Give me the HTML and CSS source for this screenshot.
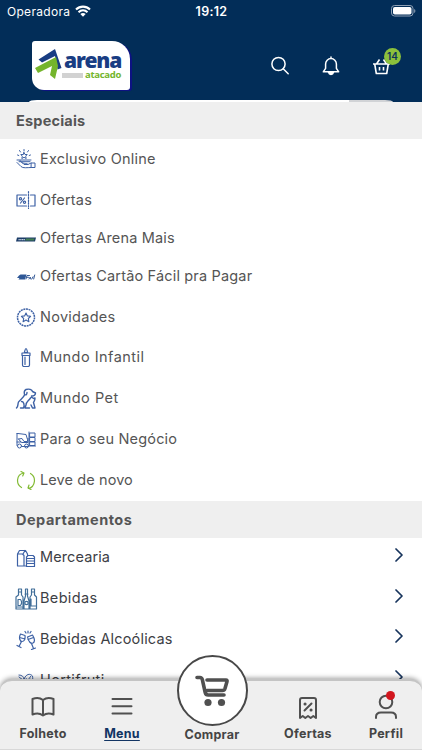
FILE: index.html
```html
<!DOCTYPE html>
<html lang="pt-BR">
<head>
<meta charset="utf-8">
<meta name="viewport" content="width=device-width, initial-scale=1">
<title>Arena Atacado</title>
<link rel="stylesheet" href="styles.css">
</head>
<body>
<div class="app">
  <header class="header">
    <div class="status">
      <div class="carrier"><span>Operadora</span>
        <svg width="16" height="12" viewBox="0 0 16 12" fill="none" stroke="#fff" stroke-width="2.1"><path d="M1 4.500C5 .6 11 .6 15 4.500M3.500 7.200c2.600-2.400 6.400-2.400 9 0"/><path d="M5.300 8.900c1.600-1.300 3.800-1.300 5.400 0L8 11.700z" fill="#fff" stroke="none"/></svg>
      </div>
      <time class="clock">19:12</time>
      <svg class="battery" width="25" height="12" viewBox="0 0 25 12"><rect x=".5" y=".5" width="21.500" height="10.500" rx="3" fill="none" stroke="#8ea0b5"/><rect x="2" y="2" width="18.500" height="7.500" rx="1.800" fill="#fff"/><path d="M23.200 4v4c1.600-.7 1.600-3.300 0-4z" fill="#8ea0b5"/></svg>
    </div>
    <div class="bar">
      <div class="logo">
        <svg class="logo-mark" width="28" height="32" viewBox="0 0 28 32"><path d="M3.500 11.500 20 1l6.500 19-4 1.500L20 8 7 14.500z" fill="#193d83"/><path d="M0 20 21 9l2 9-3 13-5-4 2-9-14 7z" fill="#74b52c"/></svg>
        <div class="logo-words"><span class="logo-name">arena</span><div class="logo-sub"><i></i><span>atacado</span></div></div>
      </div>
      <div class="actions">
        <svg width="20" height="20" viewBox="0 0 20 20" fill="none" stroke="#fff" stroke-width="1.500" stroke-linecap="round"><circle cx="8.500" cy="8" r="6.600"/><path d="m13.200 12.700 5 5"/></svg>
        <svg width="20" height="20" viewBox="0 0 20 20" fill="none" stroke="#fff" stroke-width="1.500" stroke-linejoin="round" stroke-linecap="round"><path d="M10 1v1.500M2.300 15.800h15.400l-2.300-3.500V8A5.400 5.400 0 0 0 4.600 8v4.300z"/><path d="M7.500 16.300c.8 2.800 4.200 2.800 5 0z" fill="#fff"/></svg>
        <div class="cart">
          <svg width="20" height="20" viewBox="0 0 20 20" fill="none" stroke="#fff" stroke-width="1.600" stroke-linejoin="round"><path d="M1 8h17M2.800 8.500l1.500 9h10.400l1.500-9M4.500 8 7.500 3.500M14.500 8 11.500 3.500M7.500 11v3.500M11.500 11v3.500"/></svg>
          <span class="badge">14</span>
        </div>
      </div>
    </div>
    <div class="search-edge"></div>
  </header>

  <main class="list">
    <h2 class="first">Especiais</h2>
    <ul>
      <li><svg viewBox="0 0 20 20"><path d="m8 3.500 1 2h2.200L9.700 7.200l.5 2.300L8 8.300 5.800 9.500l.5-2.300-1.500-1.700H7zM8 .5v1.500M3.500 1.500l1 1.500M12.500 1.500l-1 1.500M1.500 6l1.300.5M14.500 6l-1.300.5M1 11h14M3 12.700h11M1 13.500l4 4c2 2 6 1 10 1M6 13.500l2 2h4l3-1.500M15.500 14H19v4.500h-3.500zM4 11.500c1 3 5 3 7 3"/></svg><span class="t1">Exclusivo Online</span></li>
      <li><svg class="ticket" viewBox="0 0 20 20"><path d="M10.500 5H1v11h9.500M14.500 5H19v11h-4.500"/><path d="M12.500 1.500v17" stroke-dasharray="1.500 1.300"/><path d="m4.500 13 4-5"/><circle cx="4.500" cy="8.700" r="1.100"/><circle cx="8.500" cy="12.300" r="1.100"/></svg><span class="t2">Ofertas</span></li>
      <li class="short"><svg viewBox="0 0 20 20"><path d="M1 8.500h19l-1 4H0z" fill="#1c3d68" stroke="none"/><path d="M10 9.500h8.500l-.5 2H9z" fill="#448052" stroke="none"/><path d="M2.500 10.600h6.500" stroke="#c5d1df" stroke-width="1.300" stroke-dasharray="1.300 .4" stroke-linecap="butt"/></svg><span class="t3">Ofertas Arena Mais</span></li>
      <li class="short"><svg class="card" viewBox="0 0 20 20"><path d="M4.500 7.500h6L9 12.500H2.500l1-1.500H1l2-2.500z" fill="#2e5796" stroke="none"/><path d="M10 12 11 8.500h2.500M10.500 10.300h2M13 12l1.200-2 .6 2M17 9.800l-1.200 2.200M18.700 8l-1 4" stroke="#355996"/></svg><span class="t4">Ofertas Cartão Fácil pra Pagar</span></li>
      <li><svg viewBox="0 0 20 20"><circle cx="10" cy="10.500" r="8.500" stroke-width="1.500" stroke-dasharray="2 .65" stroke-linecap="butt"/><path stroke-width="1.100" d="m10 6 1.400 2.900 3.200.4-2.300 2.200.6 3.200-2.900-1.600-2.900 1.600.6-3.200-2.300-2.200 3.200-.4z"/></svg><span class="t5">Novidades</span></li>
      <li><svg viewBox="0 0 20 20"><path d="M10 1.500c-1 0-1 2.500-1.700 4h3.400c-.7-1.500-.7-4-1.700-4zM6 6h8v2.500H6zM6.500 8.500V18c0 1 .5 1.500 1.500 1.500h4c1 0 1.500-.5 1.500-1.500V8.500M9 10v7.500" stroke-width="1.200"/></svg><span class="t6">Mundo Infantil</span></li>
      <li><svg class="pet" viewBox="0 0 20 20"><path d="M.5 20c2-1 1-4 2-6s5-4 6-7M10 1.500C8 2.500 8 4.500 8.500 6.500c1.500 1 2.500 0 2.500-2M10 1.500c3-1 6 0 6.500 2l3 1.500c0 3-2 3-4 3M14.500 10l1-1 2 1.500 1.500-.5c0 3-1 3-1.500 4.500L19 20h-2.500L15 17M14.500 10c-2 3-4.500 4-4.500 7l-1 3h4.500M5.500 13.500c2 0 3.500 3 2 6.500h-3"/></svg><span class="t7">Mundo Pet</span></li>
      <li><svg viewBox="0 0 20 20"><path d="M1 4.500h1l8 1 1.500 5v2H8L6 9.500 2.500 10M1 4.500v12M2.500 10l3 3.500h6.500V9.500M1 13h4M6 17.500h6M13 3v14h6.500M14 4h5v4h-5zM14 8.500h5v4h-5zM14 13h5v3.500h-5z"/><circle cx="3.500" cy="17" r="2"/><circle cx="10.500" cy="17" r="2"/></svg><span class="t8">Para o seu Negócio</span></li>
      <li class="green"><svg viewBox="0 0 20 20"><path d="M5.500 17.500C-.5 14 .5 4.500 7.500 3M14.500 3.500c6 3.500 5 13-2 15M5 1.500 8 3 6.700 6M15 19.500l-3-1.500 1-3"/></svg><span class="t9">Leve de novo</span></li>
    </ul>
    <h2 class="second">Departamentos</h2>
    <ul class="departments">
      <li><svg viewBox="0 0 20 20"><path d="M1.500 6v12H10M1.500 6l2-3.500h6l2 3.500v1M1.500 6h5l1.500 1.500V18M9 2.500 7 6M10.500 9 12 7.500h5L18.500 9v9.500h-8zM10.500 10.500h8M10.500 13h8M10.500 15.500h8" stroke-width="1.200"/></svg><span class="u1">Mercearia</span><svg class="chev" viewBox="0 0 10 14"><path d="m2 1 6 6-6 6"/></svg></li>
      <li><svg class="bottles" viewBox="0 0 20 20"><path d="M2.500 0h3v6L7 8v12H0V8l2.500-2zM8 20v-8l1.500-5V0h2v7l1.500 5v8zM15.500 0h3v6l2 2v12h-6.500V8l1.500-2zM2.500 3h3M15.500 3h3M1 18h5M15 10v7h5M9 5h3"/><circle cx="10.500" cy="14" r="1.700"/><path d="M2 10.500h2.500c1.500 2 1.500 4 0 6H2z"/></svg><span class="u2">Bebidas</span><svg class="chev" viewBox="0 0 10 14"><path d="m2 1 6 6-6 6"/></svg></li>
      <li><svg viewBox="0 0 20 20"><path d="m4.500 4 4.500 1.500c.5 4-1 6-3 6S2.500 8 4.500 4zM5.500 11.500l-2.500 5M1 15.500l4 2M11.500 7l5-2c2.500 4 2.500 7 .5 8-2 1-4.500-1-5.500-6zM15.500 13.500l2 5M15.500 19.500l4-1.500M3.500 7.500l5.500 1.500M12 9.500l5.500-2M9 1.500l1 1.500M12 1v2M15 1.500 14 3" stroke-width="1.200"/></svg><span class="u3">Bebidas Alcoólicas</span><svg class="chev" viewBox="0 0 10 14"><path d="m2 1 6 6-6 6"/></svg></li>
      <li><svg viewBox="0 0 20 20"><path d="M3 4c3 0 5 2 5 4L6 9M3 6l4 3-3 2M8 8c2-5 6-6 8.500-3 1 5-1 9-4 11-5 0-7-4-4.500-8zM10 7.500l2 1.500 3-4M15 8c1 1 1 4-1 5"/></svg><span class="u4">Hortifruti</span><svg class="chev" viewBox="0 0 10 14"><path d="m2 1 6 6-6 6"/></svg></li>
    </ul>
  </main>

  <nav class="tabs">
    <a class="tab folheto"><svg width="24" height="22" viewBox="0 0 24 22"><path d="M12 4C9.500 2 5 1.500 1.500 3v15.500c3.500-1.500 8-1 10.500 1 2.500-2 7-2.500 10.500-1V3C19 1.500 14.500 2 12 4zv15.500"/></svg><span>Folheto</span></a>
    <a class="tab menu"><svg width="24" height="22" viewBox="0 0 24 22"><path d="M2.500 3h19M2.500 10.300h19M2.500 17.600h19"/></svg><span>Menu</span></a>
    <a class="tab buy"><span>Comprar</span></a>
    <a class="tab offers"><svg width="20" height="24" viewBox="0 0 20 24"><path d="M2 22V4c0-1.500.5-2 2-2h12c1.500 0 2 .5 2 2v18l-2.700-2-2.600 2-2.700-2-2.700 2-2.600-2zM6.500 14.500l7-7"/><path d="M7 8h.1M13 14h.1" stroke-width="3" stroke-linecap="round"/></svg><span>Ofertas</span></a>
    <a class="tab profile"><svg width="24" height="26" viewBox="0 0 24 26"><circle cx="12" cy="8" r="6.300"/><path d="M2 24v-1c0-3 2-4.500 5-4.500h10c3 0 5 1.500 5 4.500v1"/></svg><span>Perfil</span><i class="dot"></i></a>
    <div class="buy-circle"><svg width="38" height="34" viewBox="0 0 38 34"><path d="M3 3.500h3c1.500 0 2 .8 2.400 2.300l2.800 12.700c.5 2 1.300 2.500 3 2.500H30M13 6h19c1 0 1.300.5 1 1.500l-2 7c-.5 1.500-1 2-2.500 2H13"/><circle class="wheel" cx="14" cy="28.500" r="3.600"/><circle class="wheel" cx="27.500" cy="28.500" r="3.600"/></svg></div>
  </nav>
</div>
</body>
</html>
```
FILE: styles.css
```css
* { box-sizing: border-box; }
body { margin: 0; background: #fff; color: #555; font-family: Inter, "Open Sans", sans-serif; }
.app { position: relative; width: 422px; height: 750px; overflow: hidden; }
.header { height: 102px; display: flex; flex-direction: column; background: #022d58; color: #fff; }
.status { height: 22px; flex: none; display: grid; grid-template-columns: 1fr auto 1fr; align-items: center; padding: 0 6px 0 7px; font-size: 12px; }
.carrier { display: flex; align-items: center; gap: 5px; letter-spacing: .3px; }
.clock { font-weight: 600; font-size: 12.500px; letter-spacing: .3px; }
.battery { justify-self: end; margin-top: -1px; }
.bar { display: flex; justify-content: space-between; height: 78px; padding: 19px 30px 0 32px; }
.logo { width: 98px; height: 49px; padding: 7px 0 0 3px; display: flex; background: #fff; border-radius: 3px 18px 3px 12px; box-shadow: 2px 1px 0 #0d1283; }
.logo-mark { flex: none; }
.logo-words { display: flex; flex-direction: column; font-family: "Open Sans", sans-serif; font-weight: 800; }
.logo-name { margin: 4px 0 0 1px; color: #193d83; font-size: 21px; line-height: 16px; letter-spacing: -1.200px; }
.logo-sub { display: flex; align-items: center; margin: 1px 0 0 -1px; }
.logo-sub i { width: 21px; height: 5px; margin-right: 2px; background: #d2d2d2; }
.logo-sub span { color: #74b52c; font-size: 9.500px; line-height: 12px; font-weight: 700; letter-spacing: -.3px; }
.actions { display: flex; gap: 31px; padding-top: 15px; height: 35px; }
.cart { position: relative; width: 20px; height: 20px; }
.badge { position: absolute; left: 12px; top: -8px; width: 17px; height: 17px; border-radius: 50%; background: #8bc13c; color: #0c345b; font-size: 10px; font-weight: 600; line-height: 17px; text-align: center; }
.search-edge { height: 2px; margin: 0 29px; background: linear-gradient(90deg, #fff 88%, #d1d3d6 88%); border-radius: 8px 8px 0 0 / 2px 2px 0 0; }
.list h2 { height: 37px; margin: 0; padding-left: 16px; background: #efefef; font-size: 14.500px; line-height: 37px; font-weight: 700; letter-spacing: .2px; }
.list .second { letter-spacing: .5px; }
.list ul { margin: 0; padding: 0; height: 362px; list-style: none; }
.list li { display: flex; align-items: center; gap: 4px; height: 40.750px; padding: 0 18px 0 16px; font-size: 14.500px; line-height: 20px; white-space: nowrap; }
.list li.short { height: 37.900px; }
.list li.short span { margin-top: -2px; }
.list li > svg { flex: none; width: 20px; height: 20px; fill: none; stroke: #3d61a5; stroke-width: 1; stroke-linecap: round; stroke-linejoin: round; }
.list li > .ticket { stroke-width: 1.200; }
.list li > .pet { stroke-width: 1.400; overflow: visible; }
.list li > .bottles { stroke: #416e99; stroke-width: 1.200; overflow: visible; }
.list .green svg { stroke: #83bb35; stroke-width: 1.200; }
.t1 { letter-spacing: .22px; }
.t2, .t3, .t4, .t8, .u3 { letter-spacing: .17px; }
.t5 { letter-spacing: .27px; }
.t6 { letter-spacing: .46px; }
.t7 { letter-spacing: .5px; }
.t9, .u1 { letter-spacing: .1px; }
.u2, .u4 { letter-spacing: .35px; }
.departments { color: #3d4045; }
.departments span { margin-top: -2px; }
.list li > .chev { width: 10px; height: 14px; margin: -7px 0 0 auto; stroke: #17345c; stroke-width: 1.700; }
.tabs { position: absolute; left: 0; right: 0; top: 679px; height: 71px; display: grid; grid-template-columns: 86px 72px 108px 84px 72px; background: #efefef; border-bottom: 1px solid #d8d8d8; border-top: 2px solid #c4c4c4; border-radius: 12px 12px 0 0; box-shadow: 0 -1px 5px rgba(0,0,0,.38); color: #454545; font-size: 12.500px; font-weight: 700; letter-spacing: .25px; }
.tab { position: relative; display: flex; flex-direction: column; align-items: center; justify-content: flex-end; gap: 8px; padding-bottom: 7px; line-height: 16px; }
.tab svg { fill: none; stroke: #505050; stroke-width: 2; stroke-linejoin: round; stroke-linecap: round; }
.menu { color: #123463; }
.menu span { text-decoration: underline; text-underline-offset: 2px; text-decoration-thickness: 1px; }
.buy { padding-bottom: 6px; }
.offers { gap: 6px; }
.profile { gap: 6px; }
.dot { position: absolute; left: 36px; top: 10px; width: 9px; height: 9px; border-radius: 50%; background: #d2161e; }
.buy-circle { position: absolute; left: 177px; top: -26px; width: 71px; height: 71px; border: 2px solid #484848; border-radius: 50%; background: #fff; display: flex; align-items: center; justify-content: center; }
.buy-circle svg { fill: none; stroke: #505050; stroke-width: 3.600; stroke-linecap: round; stroke-linejoin: round; }
.buy-circle .wheel { fill: #505050; stroke: none; }
```
